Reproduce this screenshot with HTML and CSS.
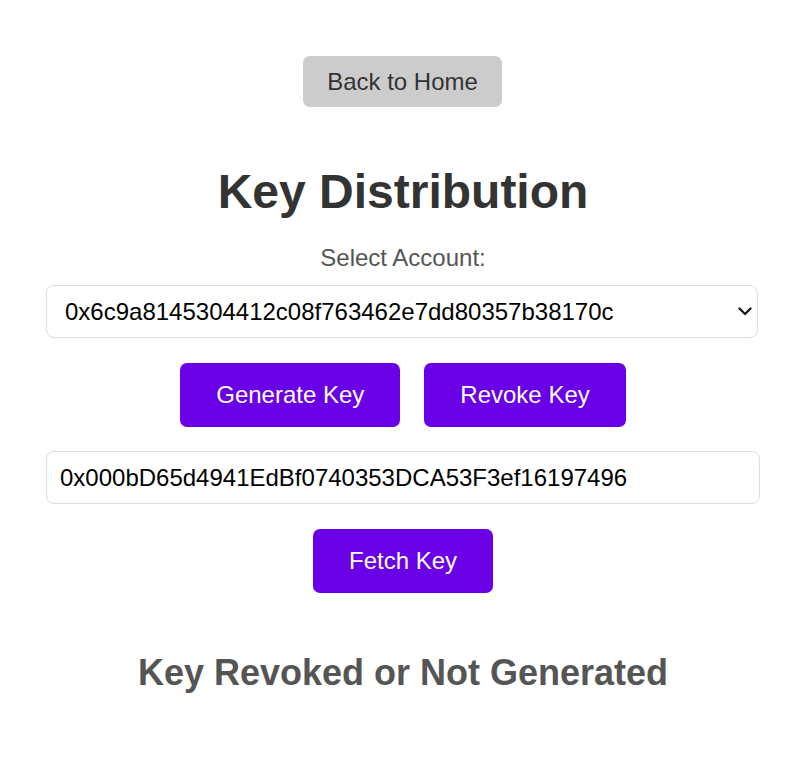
FILE: index.html
```html
<!DOCTYPE html>
<html lang="en">
<head>
<meta charset="utf-8">
<title>Key Distribution</title>
<link rel="stylesheet" href="styles.css">
</head>
<body>
<main class="page">
  <button class="btn-back" type="button">Back to Home</button>
  <h1 class="title">Key Distribution</h1>
  <label class="label" for="account">Select Account:</label>
  <div class="select-wrap">
    <select class="field select" id="account">
      <option>0x6c9a8145304412c08f763462e7dd80357b38170c</option>
    </select>
    <svg class="chevron" width="14" height="9" viewBox="0 0 14 9" aria-hidden="true">
      <path d="M1.5 1.5 L7 7 L12.5 1.5" fill="none" stroke="#111111" stroke-width="2.2" stroke-linecap="round" stroke-linejoin="round"/>
    </svg>
  </div>
  <div class="actions">
    <button class="btn" type="button">Generate Key</button>
    <button class="btn" type="button">Revoke Key</button>
  </div>
  <input class="field input" type="text" value="0x000bD65d4941EdBf0740353DCA53F3ef16197496">
  <button class="btn" type="button">Fetch Key</button>
  <h2 class="status">Key Revoked or Not Generated</h2>
</main>
</body>
</html>
```

FILE: styles.css
```css
html, body {
  margin: 0;
  padding: 0;
  background: #ffffff;
}

body {
  font-family: "Liberation Sans", Arial, sans-serif;
}

.page {
  box-sizing: border-box;
  width: 714px;
  margin-left: 46px;
  padding-top: 56px;
  display: flex;
  flex-direction: column;
  align-items: center;
}

button {
  font-family: "Liberation Sans", Arial, sans-serif;
  cursor: pointer;
}

.btn-back {
  height: 51px;
  padding: 0 24px;
  margin-left: -1px;
  font-size: 24px;
  color: #333333;
  background: #cccccc;
  border: none;
  border-radius: 7px;
}

.title {
  margin: 57px 0 0;
  font-size: 48px;
  line-height: 55px;
  font-weight: bold;
  color: #333333;
}

.label {
  margin-top: 25px;
  font-size: 24px;
  line-height: 28px;
  color: #555555;
}

.field {
  box-sizing: border-box;
  height: 53px;
  font-family: "Liberation Sans", Arial, sans-serif;
  font-size: 24px;
  color: #000000;
  background: #ffffff;
  border: 1px solid #dddddd;
  border-radius: 8px;
  outline: none;
}

.select-wrap {
  position: relative;
  margin-top: 13px;
  align-self: flex-start;
  width: 712px;
}

.select {
  display: block;
  width: 100%;
  padding: 0 40px 0 18px;
  -webkit-appearance: none;
  appearance: none;
}

.chevron {
  position: absolute;
  right: 6px;
  top: 22px;
  pointer-events: none;
}

.actions {
  margin-top: 25px;
  display: flex;
  gap: 24px;
}

.btn {
  height: 64px;
  padding: 0 36px;
  font-size: 24px;
  color: #ffffff;
  background: #6a00e6;
  border: none;
  border-radius: 7px;
}

.input {
  margin: 24px 0 25px;
  width: 714px;
  padding: 0 13px;
}

.status {
  margin: 59px 0 0;
  font-size: 36px;
  line-height: 41px;
  font-weight: bold;
  color: #555555;
}
```
